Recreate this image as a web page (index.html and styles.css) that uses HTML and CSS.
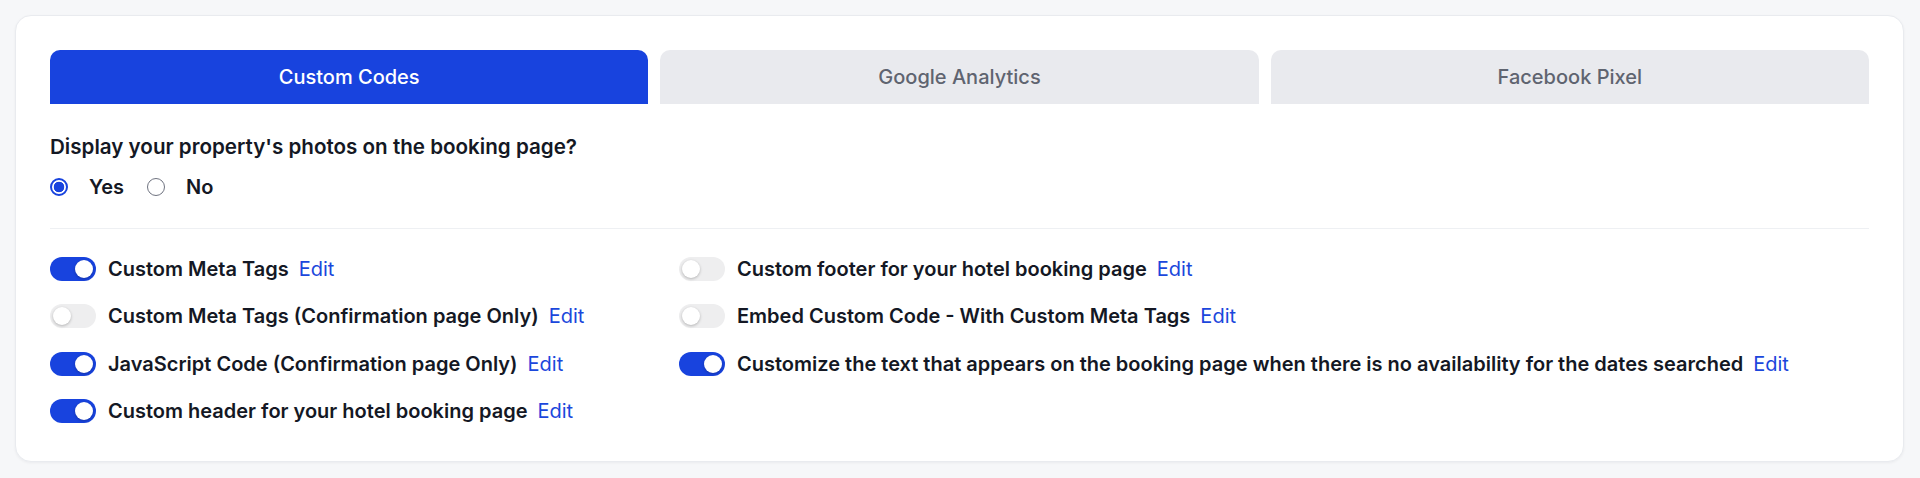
FILE: index.html
```html
<!DOCTYPE html>
<html lang="en">
<head>
<meta charset="utf-8">
<title>Custom Codes</title>
<link rel="stylesheet" href="styles.css">
</head>
<body>
<div class="page">
  <section class="card">
    <nav class="tabs">
      <div class="tab active">Custom Codes</div>
      <div class="tab">Google Analytics</div>
      <div class="tab">Facebook Pixel</div>
    </nav>

    <div class="question">Display your property's photos on the booking page?</div>
    <div class="radios">
      <label class="radio-opt"><span class="radio checked"></span><span>Yes</span></label>
      <label class="radio-opt"><span class="radio"></span><span>No</span></label>
    </div>

    <hr class="divider">

    <div class="settings">
      <div class="col">
        <div class="row"><span class="toggle on"></span><span class="label">Custom Meta Tags</span><a class="edit">Edit</a></div>
        <div class="row"><span class="toggle"></span><span class="label">Custom Meta Tags (Confirmation page Only)</span><a class="edit">Edit</a></div>
        <div class="row"><span class="toggle on"></span><span class="label">JavaScript Code (Confirmation page Only)</span><a class="edit">Edit</a></div>
        <div class="row"><span class="toggle on"></span><span class="label">Custom header for your hotel booking page</span><a class="edit">Edit</a></div>
      </div>
      <div class="col">
        <div class="row"><span class="toggle"></span><span class="label">Custom footer for your hotel booking page</span><a class="edit">Edit</a></div>
        <div class="row"><span class="toggle"></span><span class="label">Embed Custom Code - With Custom Meta Tags</span><a class="edit">Edit</a></div>
        <div class="row"><span class="toggle on"></span><span class="label">Customize the text that appears on the booking page when there is no availability for the dates searched</span><a class="edit">Edit</a></div>
      </div>
    </div>
  </section>
</div>
</body>
</html>
```

FILE: styles.css
```css
* { box-sizing: border-box; }

html, body {
  margin: 0;
  padding: 0;
  background: #f6f7f9;
  font-family: Inter, "Noto Sans", "Liberation Sans", sans-serif;
  color: #141824;
}

.page {
  padding: 15px 16px 16px 15px;
}

.card {
  background: #ffffff;
  border: 1px solid #e9ebef;
  border-radius: 16px;
  box-shadow: 0 1px 3px rgba(16, 24, 40, 0.05);
  padding: 34px 34px 20px 34px;
  min-height: 447px;
}

.tabs {
  display: grid;
  grid-template-columns: 1fr 1fr 1fr;
  column-gap: 12px;
}

.tab {
  height: 54px;
  display: flex;
  align-items: center;
  justify-content: center;
  background: #e9eaee;
  color: #5f6470;
  border-radius: 10px 10px 0 0;
  font-size: 20px;
  font-weight: 500;
}

.tab.active {
  background: #1843de;
  color: #ffffff;
}

.question {
  margin-top: 31px;
  font-size: 20.6px;
  font-weight: 600;
  line-height: 24px;
}

.radios {
  display: flex;
  align-items: center;
  margin-top: 16px;
  height: 24px;
  gap: 23px;
}

.radio-opt {
  display: flex;
  align-items: center;
  gap: 21px;
  font-size: 20px;
  font-weight: 600;
}

.radio {
  width: 18px;
  height: 18px;
  border-radius: 50%;
  border: 1px solid #6f7380;
  background: #fff;
  display: inline-block;
}

.radio.checked {
  border: 2px solid #1843de;
  background: radial-gradient(circle, #1843de 0 5px, #ffffff 5.6px);
}

.divider {
  border: 0;
  border-top: 1px solid #eef0f3;
  margin: 29px 0 16px 0;
}

.settings {
  display: grid;
  grid-template-columns: 629px 1fr;
}

.row {
  display: flex;
  align-items: center;
  height: 47.5px;
}

.toggle {
  position: relative;
  width: 46px;
  height: 24px;
  border-radius: 12px;
  background: #eeeeef;
  flex: none;
  margin-right: 12px;
}

.toggle::after {
  content: "";
  position: absolute;
  top: 3px;
  left: 3px;
  width: 18px;
  height: 18px;
  border-radius: 50%;
  background: #ffffff;
  box-shadow: 0 1px 3px rgba(0, 0, 0, 0.25);
}

.toggle.on {
  background: #1843de;
}

.toggle.on::after {
  left: 25px;
}

.label {
  font-size: 20px;
  font-weight: 600;
  white-space: nowrap;
}

.edit {
  margin-left: 10px;
  font-size: 20px;
  font-weight: 400;
  color: #1b47dc;
  cursor: pointer;
}
```
